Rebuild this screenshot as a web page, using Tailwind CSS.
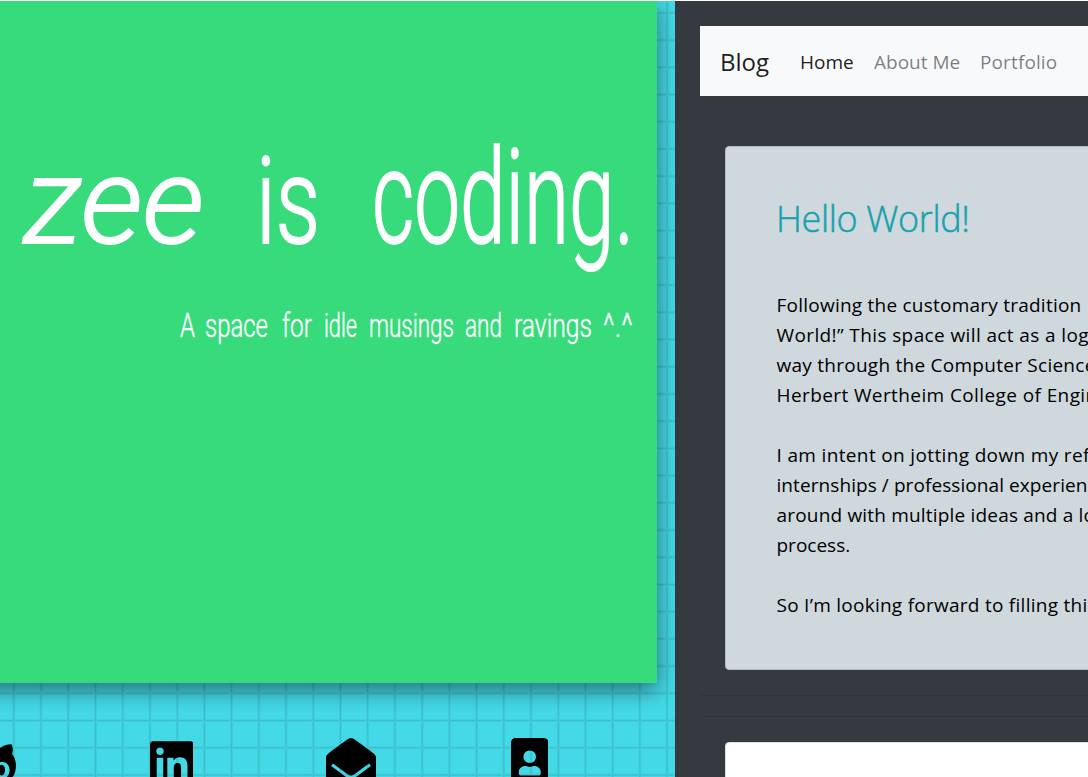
<!DOCTYPE html>
<html lang="en">
<head>
<meta charset="utf-8">
<title>zee is coding.</title>
<script src="https://cdn.jsdelivr.net/npm/@tailwindcss/browser@4"></script>
</head>
<body class="h-[777px] w-[1088px] overflow-hidden bg-white pt-px font-['Open_Sans',sans-serif]">
<div class="flex h-[776px]">
  <section class="flex w-[675px] shrink-0 flex-col overflow-hidden bg-[#44d9e6] bg-[linear-gradient(90deg,#41cfdb_0.6px,#3bbecb_0.6px,#3bbecb_2px,#41cfdb_2px,#41cfdb_2.6px,transparent_2.6px),linear-gradient(180deg,#41cfdb_0.6px,#3bbecb_0.6px,#3bbecb_2px,#41cfdb_2px,#41cfdb_2.6px,transparent_2.6px)] bg-size-[27.22px_27.22px] bg-position-[12.4px_10.4px]">
    <header class="-ml-[60px] h-[682px] w-[717px] shrink-0 bg-[#37db7b] pl-[60px] shadow-[0_8px_20px_0_rgba(0,0,0,0.27),0_6px_20px_0_rgba(0,0,0,0.25)]">
      <svg class="block h-[682px] w-[657px] fill-white font-['Roboto',sans-serif] font-light" viewBox="0 1 657 682">
        <g stroke="#fff" stroke-width="2">
          <text font-size="120" x="24" y="243" textLength="180" lengthAdjust="spacingAndGlyphs" font-style="italic">zee</text>
          <text font-size="120" x="256" y="243" textLength="64" lengthAdjust="spacingAndGlyphs">is</text>
          <text font-size="132" x="372" y="243" textLength="262" lengthAdjust="spacingAndGlyphs">coding.</text>
        </g>
        <g font-size="33" stroke="#fff" stroke-width=".4">
          <text x="180" y="337" textLength="15" lengthAdjust="spacingAndGlyphs">A</text>
          <text x="205" y="337" textLength="63" lengthAdjust="spacingAndGlyphs">space</text>
          <text x="282" y="337" textLength="30" lengthAdjust="spacingAndGlyphs">for</text>
          <text x="324" y="337" textLength="33" lengthAdjust="spacingAndGlyphs">idle</text>
          <text x="369" y="337" textLength="85" lengthAdjust="spacingAndGlyphs">musings</text>
          <text x="465" y="337" textLength="37" lengthAdjust="spacingAndGlyphs">and</text>
          <text x="514" y="337" textLength="78" lengthAdjust="spacingAndGlyphs">ravings</text>
          <text x="603" y="337" textLength="30" lengthAdjust="spacingAndGlyphs">^.^</text>
        </g>
      </svg>
    </header>
    <nav class="-ml-[97px] mt-[55px] flex">
      <a class="flex w-[179px] shrink-0 justify-center"><svg class="h-[50px]" viewBox="0 0 480 512"><path d="M186.1 328.7c0 20.9-10.9 55.1-36.7 55.1s-36.7-34.2-36.7-55.1 10.9-55.1 36.7-55.1 36.7 34.2 36.7 55.1zM480 278.2c0 31.9-3.2 65.7-17.5 95-37.9 76.6-142.1 74.8-216.7 74.8-75.8 0-186.2 2.7-225.6-74.8-14.6-29-20.2-63.1-20.2-95 0-41.9 13.9-81.5 41.5-113.6-5.2-15.8-7.7-32.4-7.7-48.8 0-21.5 4.9-32.3 14.6-51.8 45.3 0 74.3 9 108.8 36 29-6.9 58.8-10 88.7-10 27 0 54.2 2.9 80.4 9.2 34-26.7 63-35.2 107.8-35.2 9.8 19.5 14.6 30.3 14.6 51.8 0 16.4-2.6 32.7-7.7 48.2 27.5 32.4 39 72.3 39 114.2zm-64.3 50.5c0-43.9-26.7-82.6-73.5-82.6-18.9 0-37 3.4-56 6-14.9 2.3-29.8 3.2-45.1 3.2-15.2 0-30.1-.9-45.1-3.2-18.7-2.6-37-6-56-6-46.8 0-73.5 38.7-73.5 82.6 0 87.8 80.4 101.3 150.4 101.3h48.2c70.3 0 150.6-13.4 150.6-101.3zm-82.6-55.1c-25.8 0-36.7 34.2-36.7 55.1s10.9 55.1 36.7 55.1 36.7-34.2 36.7-55.1-10.9-55.1-36.7-55.1z"/></svg></a>
      <a class="flex w-[179px] shrink-0 justify-center"><svg class="h-[50px]" viewBox="0 0 448 512"><path d="M416 32H31.9C14.3 32 0 46.5 0 64.3v383.4C0 465.5 14.3 480 31.9 480H416c17.6 0 32-14.5 32-32.3V64.3c0-17.8-14.4-32.3-32-32.3zM135.4 416H69V202.2h66.5V416zm-33.2-243c-21.3 0-38.5-17.3-38.5-38.5S80.9 96 102.2 96c21.2 0 38.5 17.3 38.5 38.5 0 21.3-17.2 38.5-38.5 38.5zm282.1 243h-66.4V312c0-24.8-.5-56.7-34.5-56.7-34.6 0-39.9 27-39.9 54.9V416h-66.4V202.2h63.7v29.2h.9c8.9-16.8 30.6-34.5 62.9-34.5 67.2 0 79.7 44.3 79.7 101.9V416z"/></svg></a>
      <a class="flex w-[179px] shrink-0 justify-center"><svg class="h-[50px]" viewBox="0 0 512 512"><path d="M512 464c0 26.51-21.49 48-48 48H48c-26.51 0-48-21.49-48-48V200.724a48 48 0 0 1 18.387-37.776c24.913-19.529 45.501-35.365 164.2-121.511C199.412 29.17 232.797-.347 256 .003c23.198-.354 56.596 29.172 73.413 41.433 118.687 86.137 139.303 101.995 164.2 121.512A48 48 0 0 1 512 200.724V464zm-65.666-196.605c-2.563-3.728-7.7-4.595-11.339-1.907-22.845 16.873-55.462 40.705-105.582 77.079-16.825 12.266-50.21 41.781-73.413 41.43-23.211.344-56.559-29.143-73.413-41.43-50.114-36.37-82.734-60.204-105.582-77.079-3.639-2.688-8.776-1.821-11.339 1.907l-9.072 13.196a7.998 7.998 0 0 0 1.839 10.967c22.887 16.899 55.454 40.69 105.303 76.868 20.274 14.781 56.524 47.813 92.264 47.573 35.724.242 71.961-32.771 92.263-47.573 49.85-36.179 82.418-59.97 105.303-76.868a7.998 7.998 0 0 0 1.839-10.967l-9.071-13.196z"/></svg></a>
      <a class="flex w-[179px] shrink-0 justify-center"><svg class="h-[50px]" viewBox="0 0 384 512"><path d="M336 0H48C21.5 0 0 21.5 0 48v416c0 26.5 21.5 48 48 48h288c26.5 0 48-21.5 48-48V48c0-26.5-21.5-48-48-48zM192 128c35.3 0 64 28.7 64 64s-28.7 64-64 64-64-28.7-64-64 28.7-64 64-64zm112 236.8c0 10.6-10 19.2-22.4 19.2H102.4C90 384 80 375.4 80 364.8v-19.2c0-31.8 30.1-57.6 67.2-57.6h5c12.3 5.1 25.7 8 39.8 8s27.6-2.9 39.8-8h5c37.1 0 67.2 25.8 67.2 57.6v19.2z"/></svg></a>
    </nav>
  </section>

  <main class="w-[413px] overflow-hidden bg-[#343a40] pl-[25px] pt-[25px] whitespace-nowrap">
    <nav class="flex h-[70px] items-center bg-[#f8f9fa] pl-[20px] pt-[2px] text-[19px] text-black/50">
      <a class="w-[80px] text-[24px] text-black/90">Blog</a>
      <a class="w-[74px] text-black/90">Home</a>
      <a class="w-[106px]">About Me</a>
      <a class="tracking-[0.12px]">Portfolio</a>
    </nav>
    <article class="ml-[25px] mt-[50px] h-[524px] w-[600px] rounded-[4px] border border-[#b5bdc1] bg-[#cfd8dd] pl-[51px] pt-[47px]">
      <h1 class="-ml-px text-[36px] leading-[50px] font-light tracking-[-0.35px] text-[#17a2ae] [-webkit-text-stroke:0.5px_#17a2ae]">Hello World!</h1>
      <div class="-ml-[0.5px] mt-[46px] text-[19px] leading-[30px] text-black">
        <p class="tracking-[0.234px]">Following the customary tradition</p>
        <p class="tracking-[0.387px]">World!” This space will act as a log</p>
        <p class="tracking-[0.26px]">way through the Computer Science</p>
        <p class="tracking-[0.4px]">Herbert Wertheim College of Engineering</p>
        <p class="mt-[30px] tracking-[0.351px]">I am intent on jotting down my reflections</p>
        <p class="tracking-[0.078px]">internships / professional experiences</p>
        <p class="tracking-[0.184px]">around with multiple ideas and a lot</p>
        <p>process.</p>
        <p class="mt-[30px] tracking-[0.264px]">So I’m looking forward to filling this</p>
      </div>
    </article>
    <hr class="mt-[25px] border-black/10">
    <hr class="mt-[20px] border-black/10">
    <article class="ml-[25px] mt-[25px] h-[100px] w-[600px] rounded-[4px] border border-[#dfdfdf] bg-white"></article>
  </main>
</div>
</body>
</html>
